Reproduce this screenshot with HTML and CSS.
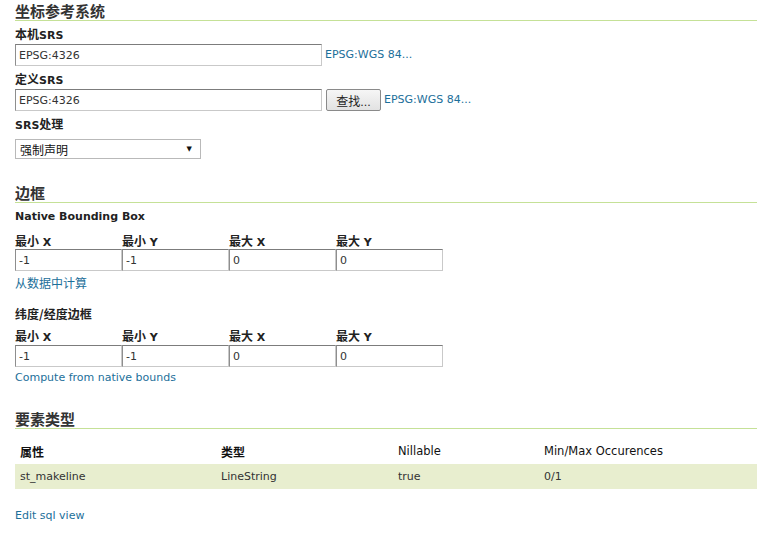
FILE: index.html
```html
<!DOCTYPE html>
<html lang="zh-CN">
<head>
<meta charset="utf-8">
<title>图层 - 数据</title>
<link rel="stylesheet" href="styles.css">
</head>
<body>
<div class="page">
  <section class="sect">
    <h3 class="sect-title">坐标参考系统</h3>
    <div class="field">
      <div class="label"><span class="cjk">本机</span>SRS</div>
      <div class="inline-row">
        <input class="text srs" type="text" value="EPSG:4326"><a class="link" href="#">EPSG:WGS 84...</a>
      </div>
    </div>
    <div class="field">
      <div class="label"><span class="cjk">定义</span>SRS</div>
      <div class="inline-row">
        <input class="text srs" type="text" value="EPSG:4326"><button class="btn" type="button"><span class="cjk">查找</span>...</button><a class="link" href="#">EPSG:WGS 84...</a>
      </div>
    </div>
    <div class="field field-select">
      <div class="label">SRS<span class="cjk">处理</span></div>
      <div class="select">
        <span class="cjk">强制声明</span>
        <span class="arrow">&#9660;</span>
      </div>
    </div>
  </section>

  <section class="sect sect-bbox">
    <h3 class="sect-title">边框</h3>
    <div class="sub-label">Native Bounding Box</div>
    <div class="bbox">
      <div class="bbox-label"><span class="cjk">最小</span> X</div>
      <div class="bbox-label"><span class="cjk">最小</span> Y</div>
      <div class="bbox-label"><span class="cjk">最大</span> X</div>
      <div class="bbox-label"><span class="cjk">最大</span> Y</div>
      <input class="text" type="text" value="-1">
      <input class="text" type="text" value="-1">
      <input class="text" type="text" value="0">
      <input class="text" type="text" value="0">
    </div>
    <a class="link block-link cjk" href="#">从数据中计算</a>

    <div class="sub-label sub-label-2"><span class="cjk">纬度/经度边框</span></div>
    <div class="bbox bbox-2">
      <div class="bbox-label"><span class="cjk">最小</span> X</div>
      <div class="bbox-label"><span class="cjk">最小</span> Y</div>
      <div class="bbox-label"><span class="cjk">最大</span> X</div>
      <div class="bbox-label"><span class="cjk">最大</span> Y</div>
      <input class="text" type="text" value="-1">
      <input class="text" type="text" value="-1">
      <input class="text" type="text" value="0">
      <input class="text" type="text" value="0">
    </div>
    <a class="link block-link link-compute" href="#">Compute from native bounds</a>
  </section>

  <section class="sect sect-types">
    <h3 class="sect-title">要素类型</h3>
    <table class="attrs">
      <colgroup>
        <col class="c1"><col class="c2"><col class="c3"><col class="c4">
      </colgroup>
      <thead>
        <tr><th class="cjk-th">属性</th><th class="cjk-th">类型</th><th>Nillable</th><th>Min/Max Occurences</th></tr>
      </thead>
      <tbody>
        <tr class="odd"><td>st_makeline</td><td>LineString</td><td>true</td><td>0/1</td></tr>
      </tbody>
    </table>
    <a class="link block-link link-edit" href="#">Edit sql view</a>
  </section>
</div>
</body>
</html>
```

FILE: styles.css
```css
html, body {
  margin: 0;
  padding: 0;
  background: #ffffff;
}

body {
  font-family: "DejaVu Sans", Verdana, "Noto Sans CJK SC", sans-serif;
  font-size: 11px;
  color: #333333;
  overflow: hidden;
}

.page {
  padding-left: 15px;
}

.cjk {
  font-family: "Noto Sans CJK SC", sans-serif;
  font-size: 12px;
}

.sect-title {
  margin: 0;
  padding-top: 2px;
  height: 18px;
  line-height: 18px;
  font-family: "Noto Sans CJK SC", sans-serif;
  font-size: 15px;
  font-weight: 700;
  color: #333333;
  border-bottom: 1px solid #c5e197;
}

.field {
  margin-top: 6px;
}

.label {
  height: 14px;
  line-height: 14px;
  font-weight: 700;
  color: #222222;
  margin-bottom: 3px;
}

.label .cjk {
  font-weight: 700;
}

.inline-row {
  display: flex;
  align-items: center;
  height: 22px;
}

.text {
  box-sizing: border-box;
  height: 22px;
  margin: 0;
  padding: 0 3px;
  font-family: "DejaVu Sans", Verdana, sans-serif;
  font-size: 11px;
  color: #333333;
  background: #ffffff;
  border-style: solid;
  border-width: 1px;
  border-color: #7c7c7c #c9c9c9 #c9c9c9 #8e8e8e;
  outline: none;
}

.text.srs {
  width: 307px;
}

.link {
  color: #1c6f9a;
  text-decoration: none;
}

.inline-row .link {
  margin-left: 3px;
  line-height: 14px;
}

.btn {
  box-sizing: border-box;
  height: 22px;
  width: 55px;
  margin: 0 0 0 4px;
  padding: 0;
  font-family: "DejaVu Sans", Verdana, sans-serif;
  font-size: 11px;
  color: #222222;
  border: 1px solid #8a8a8a;
  border-radius: 2px;
  background: linear-gradient(#f6f6f6, #e2e2e2);
}

.btn .cjk {
  font-size: 12px;
}

.field-select .label {
  margin-bottom: 8px;
}

.select {
  box-sizing: border-box;
  width: 186px;
  height: 20px;
  border: 1px solid #b9b9b9;
  background: #ffffff;
  display: flex;
  align-items: center;
  justify-content: space-between;
  padding: 0 8px 0 4px;
  color: #111111;
}

.select .arrow {
  font-family: "DejaVu Sans", sans-serif;
  font-size: 7px;
  color: #111111;
}

.sect-bbox {
  margin-top: 23px;
}

.sub-label {
  margin-top: 7px;
  height: 14px;
  line-height: 14px;
  font-weight: 700;
  color: #222222;
}

.sub-label .cjk {
  font-weight: 700;
}

.sub-label-2 {
  margin-top: 17px;
}

.bbox {
  display: grid;
  grid-template-columns: repeat(4, 107px);
  grid-template-rows: 14px 22px;
  row-gap: 1px;
  margin-top: 10px;
}

.bbox-2 {
  margin-top: 8px;
  row-gap: 2px;
}

.bbox-label {
  line-height: 14px;
  font-weight: 700;
  color: #222222;
}

.bbox-label .cjk {
  font-weight: 700;
}

.bbox .text {
  width: 107px;
}

.block-link {
  display: block;
  height: 14px;
  line-height: 14px;
  margin-top: 5px;
  width: max-content;
}

.link-compute {
  margin-top: 4px;
}

.sect-types {
  margin-top: 23px;
}

.attrs {
  margin-top: 9px;
  width: 742px;
  table-layout: fixed;
  border-collapse: collapse;
  border-spacing: 0;
}

.attrs .c1 { width: 201px; }
.attrs .c2 { width: 177px; }
.attrs .c3 { width: 146px; }
.attrs .c4 { width: 218px; }

.attrs th {
  height: 26px;
  padding: 0 5px;
  text-align: left;
  font-size: 11.5px;
  font-weight: 400;
  color: #111111;
  vertical-align: middle;
}

.attrs th.cjk-th {
  font-family: "Noto Sans CJK SC", sans-serif;
  font-size: 12px;
  font-weight: 700;
}

.attrs td {
  height: 25px;
  padding: 0 5px;
  color: #333333;
  vertical-align: middle;
}

.attrs tr.odd td {
  background: #e8eecf;
}

.link-edit {
  margin-top: 20px;
}
```
